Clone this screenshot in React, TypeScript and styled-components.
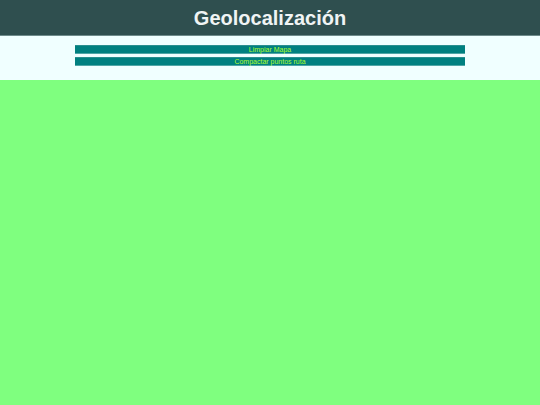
import React from "react";
import styled, { createGlobalStyle } from "styled-components";

const GlobalStyle = createGlobalStyle`
  html, body {
    margin: 0;
    padding: 0;
    height: 100%;
  }
  body {
    font-family: "Liberation Sans", Arial, sans-serif;
    background-color: #7fff7f;
  }
`;

export default function App() {
  return (
    <>
      <GlobalStyle />
      <Page>
        <Header>
          <Title>Geolocalización</Title>
        </Header>
        <Controls>
          <ActionButton>Limpiar Mapa</ActionButton>
          <ActionButton>Compactar puntos ruta</ActionButton>
        </Controls>
        <MapArea />
      </Page>
    </>
  );
}

const Page = styled.div`
  display: flex;
  flex-direction: column;
  min-height: 405px;
`;

const Header = styled.header`
  height: 35px;
  background-color: #2f4f4f;
  border-bottom: 1px solid #6e8b8b;
  display: flex;
  align-items: center;
  justify-content: center;
`;

const Title = styled.h1`
  margin: 0;
  font-size: 20px;
  font-weight: bold;
  color: #f0f4f4;
  line-height: 1;
`;

const Controls = styled.div`
  background-color: #f0ffff;
  display: flex;
  flex-direction: column;
  align-items: center;
  gap: 3px;
  padding: 9px 0 14px;
`;

const ActionButton = styled.button`
  width: 390px;
  height: 9px;
  padding: 0;
  margin: 0;
  border: none;
  border-top: 1px solid #2a8f8f;
  border-bottom: 1px solid #4fa6a6;
  background-color: #008080;
  color: #adff2f;
  font-family: "Liberation Sans", Arial, sans-serif;
  font-size: 7px;
  line-height: 7px;
  cursor: pointer;
`;

const MapArea = styled.div`
  flex: 1;
  background-color: #7fff7f;
`;
